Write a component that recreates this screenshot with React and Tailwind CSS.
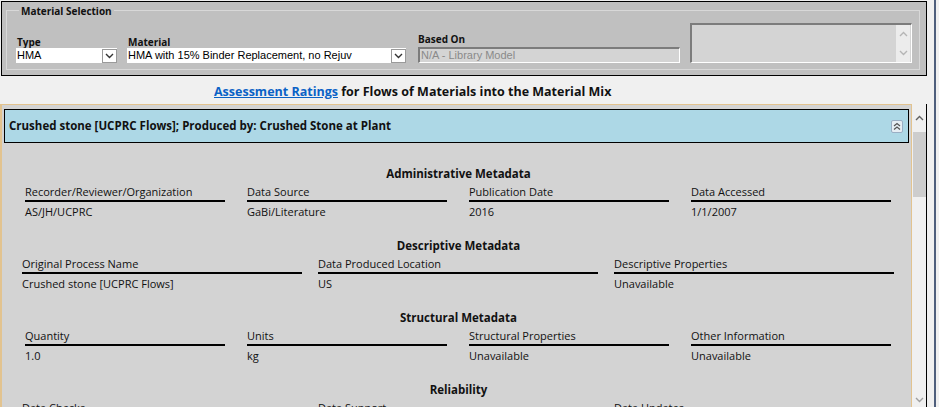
import React from 'react';

const sections = [
  {
    title: 'Administrative Metadata',
    wide: false,
    fields: [
      ['Recorder/Reviewer/Organization', 'AS/JH/UCPRC'],
      ['Data Source', 'GaBi/Literature'],
      ['Publication Date', '2016'],
      ['Data Accessed', '1/1/2007'],
    ],
  },
  {
    title: 'Descriptive Metadata',
    wide: true,
    fields: [
      ['Original Process Name', 'Crushed stone [UCPRC Flows]'],
      ['Data Produced Location', 'US'],
      ['Descriptive Properties', 'Unavailable'],
    ],
  },
  {
    title: 'Structural Metadata',
    wide: false,
    fields: [
      ['Quantity', '1.0'],
      ['Units', 'kg'],
      ['Structural Properties', 'Unavailable'],
      ['Other Information', 'Unavailable'],
    ],
  },
  {
    title: 'Reliability',
    wide: true,
    fields: [
      ['Data Checks', 'Unavailable'],
      ['Data Support', 'Unavailable'],
      ['Data Updates', 'Unavailable'],
    ],
  },
];

const Chevron = ({ up = false, className = '' }) => (
  <svg width="9" height="6" viewBox="0 0 9 6" className={className}>
    <polyline
      points={up ? '1,5 4.5,1.5 8,5' : '1,1 4.5,4.5 8,1'}
      fill="none"
      stroke="currentColor"
      strokeWidth="1.4"
    />
  </svg>
);

const Select = ({ value, width }) => (
  <div className={`${width} h-[15px] bg-white flex items-stretch`}>
    <div className="flex-1 pl-[1px] text-[11px] leading-[15px] font-['Liberation_Sans',sans-serif] text-black whitespace-nowrap overflow-hidden">
      {value}
    </div>
    <div className="w-[15px] mt-[1px] border border-[#9a9a9a] bg-white flex items-center justify-center text-[#333]">
      <Chevron />
    </div>
  </div>
);

const Section = ({ title, wide, fields }) => (
  <div className="h-[72px]">
    <div className="h-4 pl-[4px] text-center text-[11.5px] font-bold leading-4">{title}</div>
    <div className={wide ? 'mt-[2px] flex gap-4 pl-[20px]' : 'mt-[2px] flex gap-[22px] pl-[23px]'}>
      {fields.map(([label, value]) => (
        <div key={label} className={wide ? 'w-[280px]' : 'w-[200px]'}>
          <div className="h-[18px] border-b-2 border-black text-[11px] leading-4 whitespace-nowrap">{label}</div>
          <div className="mt-[2px] text-[11px] leading-4 whitespace-nowrap">{value}</div>
        </div>
      ))}
    </div>
  </div>
);

export default function App() {
  return (
    <div className="w-[939px] h-[407px] overflow-hidden bg-[#f0f0f0] flex font-['Open_Sans',sans-serif] text-[#111]">
      <div className="w-[927px] flex flex-col">
        {/* material selection group */}
        <div className="mt-[1px] ml-[1px] h-[75px] border border-black bg-[#c0c0c0] pt-[8px] pl-[4px] pr-[6px] pb-[5px]">
          <div className="relative h-full border border-[#d8d8d8] flex items-end pb-[6px] pl-[9px]">
            <div className="absolute left-[12px] top-[-6px] px-[2px] bg-[#c0c0c0] text-[10px] font-bold leading-3">
              Material Selection
            </div>
            <div className="flex flex-col">
              <div className="pl-[1px] text-[10px] font-bold leading-3">Type</div>
              <Select value="HMA" width="w-[101px]" />
            </div>
            <div className="ml-[10px] flex flex-col">
              <div className="pl-[1px] text-[10px] font-bold leading-3">Material</div>
              <Select value="HMA with 15% Binder Replacement, no Rejuv" width="w-[279px]" />
            </div>
            <div className="ml-[12px] flex flex-col">
              <div className="mb-[2px] text-[10px] font-bold leading-3">Based On</div>
              <div className="w-[262px] h-[16px] bg-[#d4d4d4] border-t-2 border-l-2 border-[#7c7c7c] border-r border-b border-r-white border-b-white pl-[1px] text-[11px] leading-[13px] font-['Liberation_Sans',sans-serif] text-[#8a8a8a]">
                N/A - Library Model
              </div>
            </div>
            <div className="ml-[10px] w-[222px] h-[40px] bg-[#d4d4d4] border-t-2 border-l-2 border-[#7c7c7c] border-r border-b border-r-white border-b-white flex justify-end">
              <div className="w-[14px] mr-[1px] bg-[#ececec] flex flex-col items-center justify-around text-[#b5b5b5]">
                <Chevron up />
                <Chevron />
              </div>
            </div>
          </div>
        </div>

        {/* title strip */}
        <div className="h-[28px] pt-[8px] pl-[214px] text-[12.5px] font-bold leading-4 whitespace-nowrap">
          <span className="text-[#0a62c6] underline">Assessment Ratings</span>
          <span> for Flows of Materials into the Material Mix</span>
        </div>

        {/* panel + scrollbar */}
        <div className="flex-1 flex min-h-0">
          <div className="w-[912px] border-t border-r border-l-2 border-[#e2c38f] bg-[#d3d3d3] overflow-hidden">
            <div className="mt-[4px] ml-[2px] w-[905px] h-[34px] border border-black bg-[#add8e6] flex items-center justify-between">
              <span className="pl-[4px] text-[11.5px] font-bold whitespace-nowrap">
                Crushed stone [UCPRC Flows]; Produced by: Crushed Stone at Plant
              </span>
              <div className="mr-[5px] w-[12px] h-[13px] rounded-[2px] border border-[#9aaec4] bg-[#e6eef4] flex flex-col items-center justify-center text-[#555]">
                <svg width="8" height="9" viewBox="0 0 8 9">
                  <polyline points="1,4 4,1.5 7,4" fill="none" stroke="currentColor" strokeWidth="1.3" />
                  <polyline points="1,7.5 4,5 7,7.5" fill="none" stroke="currentColor" strokeWidth="1.3" />
                </svg>
              </div>
            </div>
            <div className="pt-[23px]">
              {sections.map((s) => (
                <Section key={s.title} {...s} />
              ))}
            </div>
          </div>
          <div className="w-[14px] bg-[#f0f0f0] flex flex-col">
            <div className="h-[28px] flex items-center justify-center text-[#606060] pl-[1px]">
              <Chevron up />
            </div>
            <div className="ml-[1px] h-[65px] bg-[#cdcdcd]" />
            <div className="flex-1" />
            <div className="h-[10px] flex items-start justify-center text-[#a0a0a0] pl-[1px]">
              <Chevron />
            </div>
          </div>
          <div className="w-[1px] bg-black" />
        </div>
      </div>
      <div className="w-[7px]" />
      <div className="w-[2px] bg-[#4f5f7c]" />
    </div>
  );
}
